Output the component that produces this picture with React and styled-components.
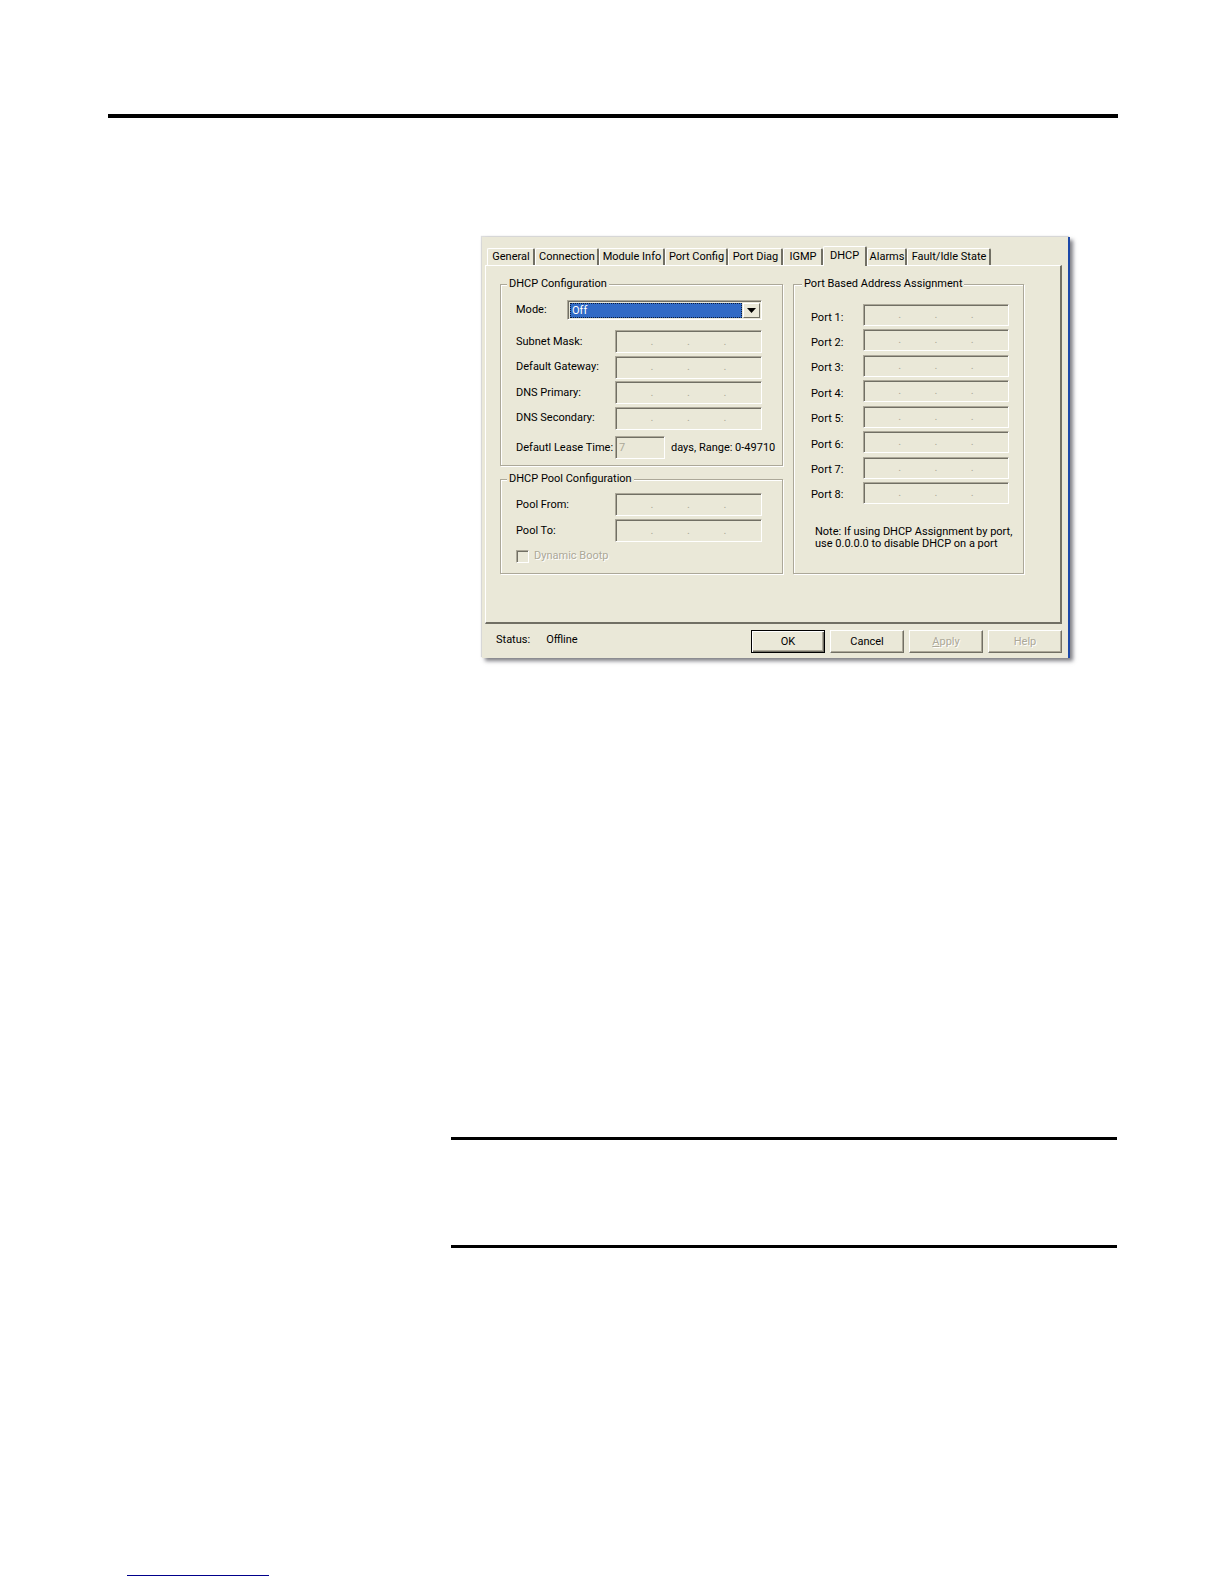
import React, { useState } from "react";
import styled, { createGlobalStyle, css } from "styled-components";

const tabs = [
  { name: "General", width: 48 },
  { name: "Connection", width: 64 },
  { name: "Module Info", width: 66 },
  { name: "Port Config", width: 63 },
  { name: "Port Diag", width: 55 },
  { name: "IGMP", width: 40 },
  { name: "DHCP", width: 44 },
  { name: "Alarms", width: 40 },
  { name: "Fault/Idle State", width: 84 },
];

const addressFields = ["Subnet Mask:", "Default Gateway:", "DNS Primary:", "DNS Secondary:"];
const poolFields = ["Pool From:", "Pool To:"];
const ports = [1, 2, 3, 4, 5, 6, 7, 8];

const GlobalStyle = createGlobalStyle`
  * {
    box-sizing: border-box;
  }
  body {
    margin: 0;
    background: #fff;
    color: #000;
    font: 11px/14px Roboto, "Liberation Sans", sans-serif;
  }
  button, input, select {
    font: inherit;
    color: inherit;
  }
`;

const sunken = css`
  border: 1px solid;
  border-color: #aca899 #fff #fff #aca899;
  box-shadow: inset 1px 1px 0 #716f64;
`;

const Page = styled.main`
  display: flex;
  flex-direction: column;
  padding: 114px 106px 8px 108px;
`;

const TopRule = styled.hr`
  width: 100%;
  height: 4px;
  margin: 0;
  border: 0;
  background: #000;
`;

const Dialog = styled.section`
  max-width: 588px;
  margin: 119px 0 0 374px;
  padding: 9px 6px 5px 3px;
  background: #eae8d8;
  border-right: 2px solid #1c48a8;
  box-shadow: 3px 3px 4px rgba(40, 40, 50, 0.6), -1px -1px 1px #ddd;
`;

const TabList = styled.div`
  display: flex;
  align-items: flex-end;
  padding-left: 2px;
`;

const Tab = styled.button`
  width: ${(props) => props.$width}px;
  height: ${(props) => (props.$active ? 20 : 17)}px;
  margin-bottom: ${(props) => (props.$active ? -1 : 0)}px;
  padding: ${(props) => (props.$active ? "0 0 2px" : "0 0 0 1px")};
  position: relative;
  z-index: ${(props) => (props.$active ? 1 : 0)};
  white-space: nowrap;
  background: #eae8d8;
  border: 1px solid #fff;
  border-right: 2px solid #716f64;
  border-bottom: 0;
  border-radius: 2px 2px 0 0;
`;

const Panel = styled.div`
  display: grid;
  grid-template-columns: minmax(0, 283fr) minmax(0, 231fr);
  gap: 10px;
  padding: 10px 36px 48px 14px;
  border: 1px solid #fff;
  border-right: 2px solid #716f64;
  border-bottom: 2px solid #716f64;
`;

const Column = styled.div`
  display: flex;
  flex-direction: column;
  gap: 5px;
`;

const Group = styled.fieldset`
  min-width: 0;
  margin: 0;
  padding: ${(props) => props.$padding};
  border: 1px solid #aca899;
  box-shadow: 1px 1px 0 #fff, inset 1px 1px 0 #fff;
`;

const Legend = styled.legend`
  margin-left: -9px;
  padding: 0 2px;
  line-height: 16px;
  white-space: nowrap;
  background: #eae8d8;
`;

const Row = styled.div`
  display: grid;
  grid-template-columns: ${(props) => props.$labelWidth}px minmax(0, 1fr);
  align-items: center;
`;

const Fields = styled.div`
  display: flex;
  flex-direction: column;
  justify-content: space-between;
  min-height: ${(props) => props.$height}px;
`;

const AddressFields = styled(Fields)`
  margin-top: 10px;
`;

const PortLabel = styled.span`
  padding-top: 5px;
`;

const SelectBox = styled.div`
  ${sunken}
  display: flex;
  height: 20px;
  padding: 2px 1px 1px 2px;
`;

const Select = styled.select`
  flex: 1;
  min-width: 0;
  padding: 0 1px;
  appearance: none;
  color: #fff;
  background: #316ac5;
  border: 1px dotted #0a1a3a;
  border-radius: 0;
  outline: 0;
  line-height: 12px;
`;

const Arrow = styled.span`
  display: flex;
  align-items: center;
  justify-content: center;
  width: 17px;
  margin-left: 1px;
  border: 1px solid #fff;
  border-color: #fff #716f64 #716f64 #fff;
`;

const AddressBox = styled.div`
  ${sunken}
  display: flex;
  align-items: center;
  height: ${(props) => props.$height || 23}px;
  padding: 1px;
  color: #aca899;
`;

const Octet = styled.input`
  flex: 1 1 0;
  width: 0;
  min-width: 0;
  height: 16px;
  padding: 0;
  border: 0;
  text-align: center;
  background: transparent;
`;

const LeaseRow = styled.div`
  display: grid;
  grid-template-columns: 99px 50px 1fr;
  align-items: center;
  margin-top: 6px;
  white-space: nowrap;
`;

const LeaseInput = styled.input`
  ${sunken}
  width: 50px;
  height: 23px;
  padding: 0 3px;
  background: transparent;
  border-radius: 0;
  color: #aca899;
`;

const LeaseNote = styled.span`
  padding-left: 6px;
`;

const CheckLabel = styled.label`
  display: flex;
  align-items: center;
  gap: 5px;
  margin-top: 7px;
  color: #aca899;
  text-shadow: 1px 1px 0 #fff;
`;

const Check = styled.input`
  ${sunken}
  appearance: none;
  width: 13px;
  height: 13px;
  margin: 0;
`;

const Note = styled.p`
  margin: 22px 0 0 4px;
  line-height: 12px;
  white-space: nowrap;
`;

const Footer = styled.footer`
  display: flex;
  align-items: center;
  padding: 6px 0 0 11px;
`;

const Status = styled.div`
  display: flex;
  gap: 16px;
  flex: 1;
  padding-bottom: 4px;
`;

const Buttons = styled.div`
  display: flex;
  gap: 5px;
`;

const Button = styled.button`
  width: 74px;
  height: 23px;
  padding: 0;
  background: #eae8d8;
  border: 1px solid #fff;
  border-color: #fff #716f64 #716f64 #fff;
  box-shadow: inset -1px -1px 0 #aca899;
  ${(props) =>
    props.$primary &&
    css`
      border-color: #000;
      box-shadow: inset 1px 1px 0 #fff, inset -1px -1px 0 #716f64, inset -2px -2px 0 #aca899;
    `}
  &:disabled {
    color: #aca899;
    text-shadow: 1px 1px 0 #fff;
  }
`;

const NoteSection = styled.section`
  height: 111px;
  margin: 479px 1px 0 343px;
  border: solid #000;
  border-width: 3px 0;
`;

const FooterLink = styled.a`
  display: block;
  width: 142px;
  margin: 327px 0 0 19px;
  border-bottom: 1px solid #00008b;
`;

const IpField = ({ label, height }) => (
  <AddressBox role="group" aria-label={label} $height={height}>
    {[1, 2, 3, 4].map((n) => (
      <React.Fragment key={n}>
        {n > 1 && <span>.</span>}
        <Octet disabled aria-label={`${label} octet ${n}`} />
      </React.Fragment>
    ))}
  </AddressBox>
);

const App = () => {
  const [active, setActive] = useState("DHCP");
  const [mode, setMode] = useState("Off");

  return (
    <Page>
      <GlobalStyle />
      <TopRule />
      <Dialog>
        <TabList role="tablist">
          {tabs.map((tab) => (
            <Tab
              key={tab.name}
              type="button"
              role="tab"
              aria-selected={active === tab.name}
              $active={active === tab.name}
              $width={tab.width}
              onClick={() => setActive(tab.name)}
            >
              {tab.name}
            </Tab>
          ))}
        </TabList>
        <Panel role="tabpanel">
          <Column>
            <Group $padding="8px 20px 6px 15px">
              <Legend>DHCP Configuration</Legend>
              <Row $labelWidth={51}>
                <label htmlFor="mode">Mode:</label>
                <SelectBox>
                  <Select id="mode" value={mode} onChange={(e) => setMode(e.target.value)}>
                    <option>Off</option>
                    <option>On</option>
                  </Select>
                  <Arrow aria-hidden="true">
                    <svg width="9" height="5" viewBox="0 0 9 5">
                      <path d="M0 0h9L4.5 5z" />
                    </svg>
                  </Arrow>
                </SelectBox>
              </Row>
              <AddressFields $height={100}>
                {addressFields.map((label) => (
                  <Row key={label} $labelWidth={99}>
                    <span>{label}</span>
                    <IpField label={label} />
                  </Row>
                ))}
              </AddressFields>
              <LeaseRow>
                <label htmlFor="lease">Defautl Lease Time:</label>
                <LeaseInput id="lease" defaultValue="7" disabled />
                <LeaseNote>days, Range: 0-49710</LeaseNote>
              </LeaseRow>
            </Group>
            <Group $padding="6px 20px 10px 15px">
              <Legend>DHCP Pool Configuration</Legend>
              <Fields $height={49}>
                {poolFields.map((label) => (
                  <Row key={label} $labelWidth={99}>
                    <span>{label}</span>
                    <IpField label={label} />
                  </Row>
                ))}
              </Fields>
              <CheckLabel>
                <Check type="checkbox" disabled />
                Dynamic Bootp
              </CheckLabel>
            </Group>
          </Column>
          <Group $padding="12px 14px 0 17px">
            <Legend>Port Based Address Assignment</Legend>
            <Fields $height={200}>
              {ports.map((port) => (
                <Row key={port} $labelWidth={52}>
                  <PortLabel>Port {port}:</PortLabel>
                  <IpField label={`Port ${port}`} height={22} />
                </Row>
              ))}
            </Fields>
            <Note>
              Note: If using DHCP Assignment by port,
              <br />
              use 0.0.0.0 to disable DHCP on a port
            </Note>
          </Group>
        </Panel>
        <Footer>
          <Status>
            <span>Status:</span>
            <span>Offline</span>
          </Status>
          <Buttons>
            <Button type="button" $primary>
              OK
            </Button>
            <Button type="button">Cancel</Button>
            <Button type="button" disabled>
              <u>A</u>pply
            </Button>
            <Button type="button" disabled>
              Help
            </Button>
          </Buttons>
        </Footer>
      </Dialog>
      <NoteSection />
      <FooterLink href="#" aria-label="Footer link" />
    </Page>
  );
};

export default App;
